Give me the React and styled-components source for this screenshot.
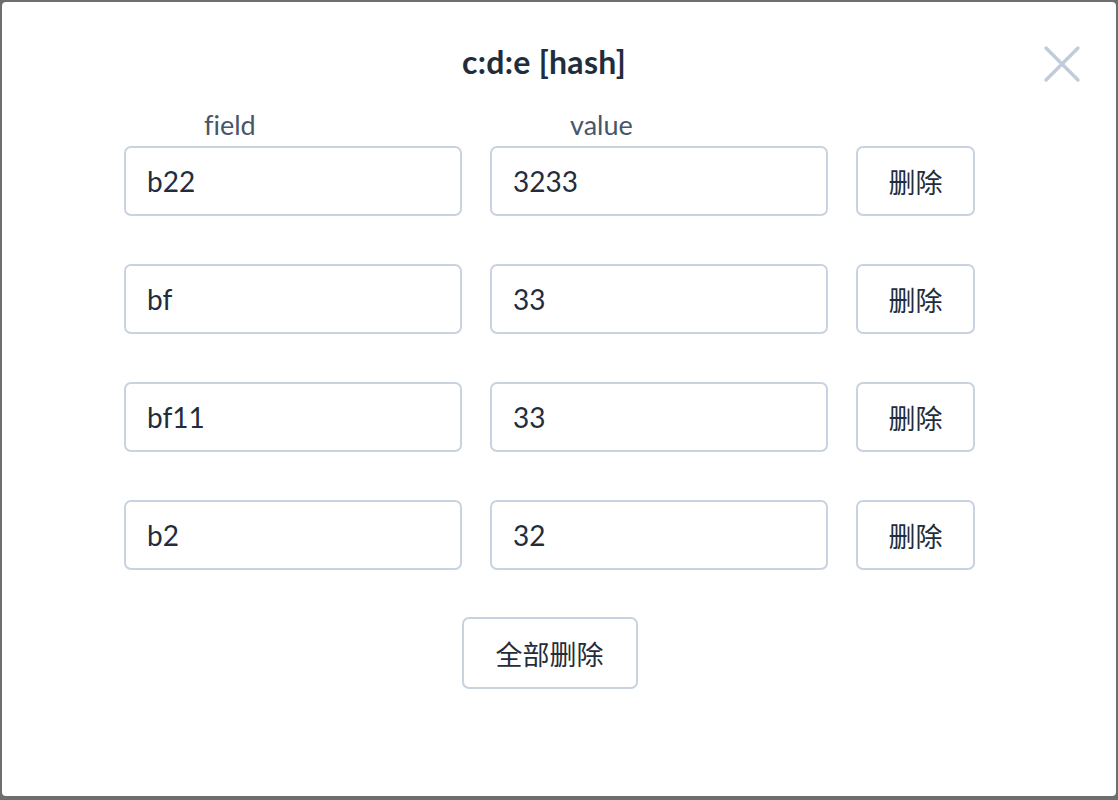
import styled, { createGlobalStyle } from 'styled-components';

const GlobalStyle = createGlobalStyle`
    html, body {
        margin: 0;
        padding: 0;
        background: #6e6e6e;
    }
    body {
        font-family: Lato, "Noto Sans CJK SC", sans-serif;
        font-variant-ligatures: none;
        color: #1f2d3d;
    }
`;

const Modal = styled.div`
    position: relative;
    box-sizing: border-box;
    margin: 2px;
    width: 1114px;
    height: 794px;
    background: #fff;
    border-radius: 4px;
    padding: 37px 0 0 122px;
`;

const Column = styled.div`
    width: 851px;
    display: flex;
    flex-direction: column;
`;

const Title = styled.h2`
    margin: 0;
    padding-right: 11px;
    text-align: center;
    font-size: 32px;
    font-weight: 700;
    letter-spacing: 0.3px;
    line-height: 46px;
    color: #1f2d3d;
`;

const CloseBtn = styled.button`
    position: absolute;
    top: 42px;
    right: 34px;
    width: 40px;
    height: 40px;
    padding: 0;
    border: none;
    background: transparent;
    cursor: pointer;
`;

const Labels = styled.div`
    display: flex;
    gap: 28px;
    margin-top: 19px;
    height: 40px;
    align-items: center;
`;

const Label = styled.span`
    width: 338px;
    padding-left: 80px;
    box-sizing: border-box;
    font-size: 27px;
    color: #475669;
    font-variant-ligatures: none;
`;

const Rows = styled.div`
    display: flex;
    flex-direction: column;
    gap: 48px;
    margin-top: 2px;
`;

const Row = styled.div`
    display: flex;
    gap: 28px;
`;

const Input = styled.input`
    box-sizing: border-box;
    width: 338px;
    height: 70px;
    border: 2px solid #c9d3e0;
    border-radius: 7px;
    padding: 0 21px;
    font-family: Lato, "Noto Sans CJK SC", sans-serif;
    font-size: 28px;
    color: #1f2d3d;
    outline: none;
`;

const Button = styled.button`
    box-sizing: border-box;
    width: ${p => p.$width}px;
    height: ${p => p.$height || 70}px;
    border: 2px solid #c9d3e0;
    border-radius: 7px;
    background: #fff;
    font-family: "Noto Sans CJK SC", sans-serif;
    font-size: 27px;
    color: #1f2d3d;
    padding: 0;
    cursor: pointer;
`;

const Footer = styled.div`
    display: flex;
    justify-content: center;
    margin-top: 47px;
`;

const rows = [
    ['b22', '3233'],
    ['bf', '33'],
    ['bf11', '33'],
    ['b2', '32'],
];

const App = () => (
    <>
        <GlobalStyle />
        <Modal>
            <CloseBtn aria-label="close">
                <svg width="40" height="40" viewBox="0 0 40 40">
                    <path d="M4 4 L36 36 M36 4 L4 36" stroke="#c0ccda" strokeWidth="3.4" strokeLinecap="round" fill="none" />
                </svg>
            </CloseBtn>
            <Column>
                <Title>c:d:e [hash]</Title>
                <Labels>
                    <Label>field</Label>
                    <Label>value</Label>
                </Labels>
                <Rows>
                    {rows.map(([f, v], i) => (
                        <Row key={i}>
                            <Input defaultValue={f} />
                            <Input defaultValue={v} />
                            <Button $width={120}>删除</Button>
                        </Row>
                    ))}
                </Rows>
                <Footer>
                    <Button $width={176} $height={72}>全部删除</Button>
                </Footer>
            </Column>
        </Modal>
    </>
);

export default App;
